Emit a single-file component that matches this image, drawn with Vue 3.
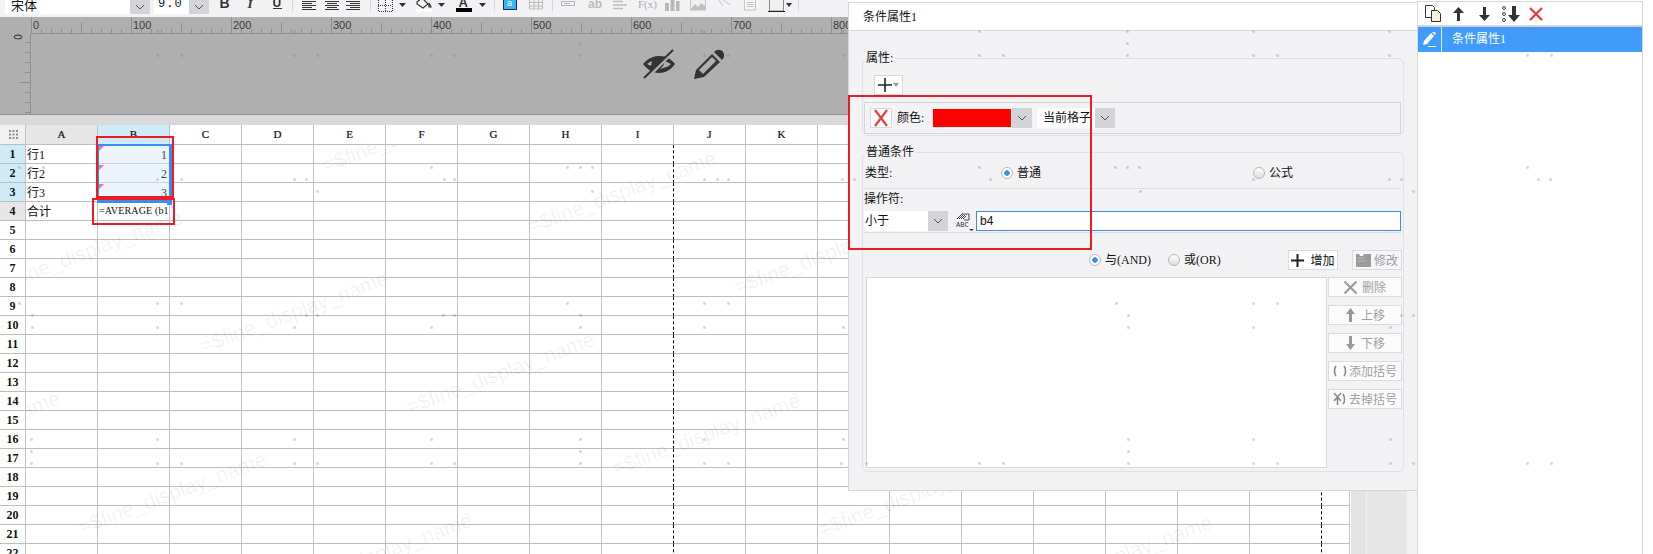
<script setup>
const cols = 'ABCDEFGHIJKLMNOPQRS'.split('')
const rows = Array.from({ length: 22 }, (_, i) => i + 1)
const cellText = {
  'A1': '行1', 'A2': '行2', 'A3': '行3', 'A4': '合计',
  'B1': '1', 'B2': '2', 'B3': '3', 'B4': '=AVERAGE (b1'
}
const ticks = []
for (let u = 0; u <= 810; u += 10) {
  ticks.push({ x: u + 0.5, h: u % 100 === 0 ? 16 : u % 50 === 0 ? 10 : 4 })
}
const labels = [0, 100, 200, 300, 400, 500, 600, 700, 800]
const vticks = [8, 18, 28, 38, 48, 58, 68, 78]

const marks = []
for (let i = -4; i < 9; i++) {
  for (let j = -3; j < 6; j++) {
    const x = 175 + 206 * i + 122 * j
    const y = 190 + 61 * i - 181 * j
    if (x > -260 && x < 1330 && y > -10 && y < 480) marks.push({ x, y })
  }
}

const dotRows = {
  30: [156, 293, 430, 703, 842, 978, 1126, 1252, 1388, 1526],
  42: [579, 1126],
  54: [156, 180, 293, 316, 430, 453, 579, 703, 727, 842, 978, 1002, 1126, 1252, 1276, 1388, 1526, 1550],
  166: [18, 30, 42, 430, 566, 579, 591, 978, 1114, 1126, 1138, 1526],
  178: [156, 180, 293, 305, 443, 453, 703, 716, 727, 841, 853, 989, 1252, 1388, 1400, 1537, 1549],
  190: [316, 591, 1139, 1412],
  302: [18, 156, 180, 566, 703, 727, 1115, 1252, 1276],
  314: [31, 305, 316, 442, 453, 579, 1127, 1400, 1412],
  326: [31, 156, 293, 430, 579, 703, 842, 1127, 1252, 1389],
  438: [30, 156, 293, 430, 579, 703, 842, 1127, 1252, 1389],
  450: [30, 579, 1127],
  462: [30, 156, 180, 293, 316, 430, 453, 579, 703, 727, 840, 865, 978, 1002, 1127, 1252, 1276, 1389, 1412, 1526, 1550]
}
const dots = []
for (const y in dotRows) dotRows[y].forEach((x) => dots.push({ x, y: Number(y) }))

const sideBtns = [
  { label: '删除', icon: 'x' },
  { label: '上移', icon: 'up' },
  { label: '下移', icon: 'down' },
  { label: '添加括号', icon: 'paren' },
  { label: '去掉括号', icon: 'unparen' }
]
</script>

<template>
  <div class="page">
    <div class="workspace">
      <div class="toolbar">
        <div class="tsel font"><span class="tsel-val">宋体</span><span class="tsel-arrow"><svg width="10" height="6" viewBox="0 0 10 6"><path d="M1 1l4 4 4-4" fill="none" stroke="#555" stroke-width="1" /></svg></span></div>
        <div class="tsel size"><span class="tsel-val digits">9.0</span><span class="tsel-arrow"><svg width="10" height="6" viewBox="0 0 10 6"><path d="M1 1l4 4 4-4" fill="none" stroke="#555" stroke-width="1" /></svg></span></div>
        <svg class="strip" width="630" height="17" viewBox="210 0 630 17">
          <text x="219.500" y="8" class="t-b">B</text>
          <text x="247.500" y="8" class="t-i">I</text>
          <text x="272.500" y="6.500" class="t-u">U</text>
          <path d="M273 8.500h9" stroke="#333" />
          <path d="M292.500 0v11M370.500 0v11M494.500 0v11M552.500 0v11M798.500 0v11" stroke="#d6d6d8" />
          <path d="M302 1.500h14M302 3.500h10M302 5.500h14M302 7.500h10M302 9.500h14" stroke="#333" />
          <path d="M325 1.500h14M327 3.500h10M325 5.500h14M327 7.500h10M325 9.500h14" stroke="#333" />
          <path d="M346 1.500h14M350 3.500h10M346 5.500h14M350 7.500h10M346 9.500h14" stroke="#333" />
          <path d="M378.500 0v11.500h14V0M385.500 0v11M378 5.500h14" fill="none" stroke="#333" stroke-dasharray="1 1" />
          <path d="M399 3h7l-3.500 4zM438 3h7l-3.500 4zM479 3h7l-3.500 4zM786 3h6l-3 4z" fill="#333" />
          <path d="M417 2l5-4 6 6-5 4-6-4zM429 3l2 4-2 0z" fill="none" stroke="#333" stroke-width="1.200" />
          <rect x="416" y="9" width="16" height="3" fill="#fff" />
          <text x="458.500" y="6.500" class="t-a">A</text>
          <rect x="456" y="8" width="16" height="4" fill="#000" />
          <rect x="503.500" y="-2" width="13" height="11.500" fill="#36b6f6" stroke="#1d2a44" />
          <text x="507" y="6" class="t-wa">a</text>
          <path d="M529.500 -1h13v10h-13zM529.500 2.500h13M529.500 6h13M534 -1v10M538.500 -1v10" fill="none" stroke="#bcbcbc" />
          <rect x="561.500" y="1.500" width="13" height="4" fill="none" stroke="#b8b8b8" />
          <path d="M564 3.500h6" stroke="#b8b8b8" />
          <text x="588" y="8" class="t-gray">ab</text>
          <path d="M613 1.500h10M613 5h14M613 8.500h10" stroke="#bdbdbd" stroke-width="1.600" />
          <text x="638" y="8" class="t-fx">F(x)</text>
          <path d="M665 3h4v8h-4zM670.500 0h4v11h-4zM676 1h3.500v10H676z" fill="#b8b8b8" />
          <rect x="690.500" y="-1" width="15" height="11" fill="#efeff0" stroke="#c4c4c4" />
          <path d="M691 9l4-5 3 3 3-4 4 3v4h-14z" fill="#c0c0c0" />
          <path d="M718 -1l5 7M722 -1l8 6" stroke="#c4c4c4" fill="none" />
          <rect x="744.500" y="-1" width="11" height="11" fill="#f6f6f6" stroke="#c4c4c4" />
          <path d="M746.500 2.500h7M746.500 4.500h7M746.500 6.500h7" stroke="#c4c4c4" />
          <rect x="769.500" y="-1" width="14" height="12" fill="#f0f0f2" stroke="#888" />
          <path d="M768 11.500h17" stroke="#222" />
        </svg>
      </div>

      <div class="preview">
        <svg class="ruler-top" width="848" height="17" viewBox="0 0 848 17">
          <rect x="31" y="16" width="817" height="1" fill="#8e8e8e" />
          <path v-for="t in ticks" :key="t.x" :d="`M${31 + t.x} ${16 - t.h}v${t.h}`" stroke="#8f8f8f" fill="none" />
          <text v-for="l in labels" :key="l" :x="33 + l" y="12" class="ruler-txt">{{ l }}</text>
        </svg>
        <div class="preview-body">
          <div class="ruler-left">
            <span class="ruler-zero">0</span>
            <span v-for="v in vticks" :key="v" class="vtick" :style="{ top: v + 'px', width: (v === 48 ? 10 : 5) + 'px' }"></span>
          </div>
          <div class="canvas">
            <svg class="eye" width="33" height="30" viewBox="0 0 33 30">
              <path d="M0 15C6 8 12 7 17 7C23 7 28 10 32 15C28 21 22 24 16 24C9 24 4 20 0 15z" fill="#333" />
              <path d="M4 15c2-1.500 3-2 5-3l-1 5c-1-.5-2-1-4-2z" fill="#afafaf" />
              <path d="M22 12c2 1 4 2 6 3-2 2-4 3-8 4l-3 1 3-3z" fill="#afafaf" />
              <path d="M3 30L32 1" stroke="#afafaf" stroke-width="3" />
              <path d="M1 29L30 1" stroke="#333" stroke-width="2" />
            </svg>
            <svg class="pencil" width="31" height="30" viewBox="0 0 31 30">
              <path d="M0 30l2-9L18 5l8 8L10 28z" fill="#333" />
              <path d="M5 21L18 8l4 4L9 25z" fill="#afafaf" />
              <path d="M20 3c3-3 7-3 9 0s1 6-1 8z" fill="#333" />
            </svg>
          </div>
        </div>
      </div>

      <div class="gap-bar"></div>

      <div class="sheet-wrap">
        <div class="sheet">
          <div class="grid">
            <div class="corner">
              <svg width="11" height="11" viewBox="0 0 11 11"><path d="M1 1h2v2H1zM4.500 1h2v2h-2zM8 1h2v2H8zM1 4.500h2v2H1zM4.500 4.500h2v2h-2zM8 4.500h2v2H8zM1 8h2v2H1zM4.500 8h2v2h-2zM8 8h2v2H8z" fill="#8d8d8d" /></svg>
            </div>
            <div v-for="c in cols" :key="c" class="colh" :class="{ gray: c === 'A', blue: c === 'B' }">{{ c === 'S' ? '' : c }}</div>
            <template v-for="r in rows" :key="r">
              <div class="rowh" :class="{ blue: r < 4, gray: r === 4 }">{{ r }}</div>
              <div
                v-for="c in cols"
                :key="c + r"
                class="cell"
                :class="{ picked: c === 'B' && r < 4, formula: c === 'B' && r === 4, pb: c === 'I' || c === 'R' }"
              ><i v-if="c === 'B' && r < 4" class="flag"></i><span>{{ cellText[c + r] }}</span></div>
            </template>
          </div>
          <div class="marks">
            <span v-for="m in marks" :key="m.x + '_' + m.y" class="mark" :style="{ left: m.x + 'px', top: m.y + 'px' }">=$fine_display_name</span>
          </div>
          <div class="selbox"><i class="handle"></i></div>
          <div class="redbox one"></div>
          <div class="redbox two"></div>
        </div>
        <div class="scroll"><div class="scroll-a"></div><div class="scroll-b"></div><div class="scroll-c"></div></div>
      </div>

      <div class="dialog">
        <div class="title">条件属性1</div>
        <div class="group first">
          <div class="legend">属性:</div>
          <button class="plus">
            <svg width="14" height="14" viewBox="0 0 14 14"><path d="M7 0v14M0 7h14" stroke="#222" stroke-width="1.600" /></svg>
            <svg width="6" height="4" viewBox="0 0 6 4"><path d="M0 0h6L3 4z" fill="#999" /></svg>
          </button>
          <div class="attr">
            <button class="xbtn"><svg width="14" height="18" viewBox="0 0 14 18"><path d="M1 1l12 16M13 1L1 17" stroke="#e8413c" stroke-width="2.200" /></svg></button>
            <span class="attr-label">颜色:</span>
            <div class="sel color"><span class="swatch"></span><span class="arrow"><svg width="10" height="6" viewBox="0 0 10 6"><path d="M1 1l4 4 4-4" fill="none" stroke="#555" /></svg></span></div>
            <div class="sel scope"><span class="val">当前格子</span><span class="arrow"><svg width="10" height="6" viewBox="0 0 10 6"><path d="M1 1l4 4 4-4" fill="none" stroke="#555" /></svg></span></div>
          </div>
        </div>

        <div class="group second">
          <div class="legend">普通条件</div>
          <div class="type-row">
            <span class="type-label">类型:</span>
            <label class="radio w252"><i class="dot on"></i>普通</label>
            <label class="radio"><i class="dot"></i>公式</label>
          </div>
          <div class="rule r1"></div>
          <div class="op-label">操作符:</div>
          <div class="op-row">
            <div class="sel op"><span class="val">小于</span><span class="arrow"><svg width="10" height="6" viewBox="0 0 10 6"><path d="M1 1l4 4 4-4" fill="none" stroke="#555" /></svg></span></div>
            <div class="abc">
              <svg width="20" height="20" viewBox="0 0 20 20">
                <path d="M2 8l5-5h7v6H9" fill="none" stroke="#444" />
                <path d="M4 8l4-4M6 8l4-4M8 8l3-3" stroke="#444" />
                <text x="1" y="15.500" class="t-abc">ABC</text>
                <path d="M14 18h5l-2.500 2z" fill="#333" />
              </svg>
            </div>
            <div class="input">b4</div>
          </div>
          <div class="rule r2"></div>
          <div class="logic-row">
            <label class="radio w79"><i class="dot on"></i>与(AND)</label>
            <label class="radio w120"><i class="dot"></i>或(OR)</label>
            <button class="btn add">
              <svg width="13" height="13" viewBox="0 0 13 13"><path d="M6.500 0v13M0 6.500h13" stroke="#222" stroke-width="2" /></svg>增加
            </button>
            <button class="btn mod">
              <svg width="15" height="14" viewBox="0 0 15 14"><path d="M0 1h3l1 2h3l1-2h7v13H0z" fill="#9b9b9b" /><path d="M2 5h7M2 8h8" stroke="#bbb" /></svg>修改
            </button>
          </div>
          <div class="list-row">
            <div class="list"></div>
            <div class="side-btns">
              <button v-for="b in sideBtns" :key="b.label" class="btn side" :class="b.icon">
                <svg v-if="b.icon === 'x'" width="13" height="13" viewBox="0 0 13 13"><path d="M0.500 0.500l12 12M12.500 0.500l-12 12" stroke="#999" stroke-width="2" /></svg>
                <svg v-else-if="b.icon === 'up'" width="11" height="14" viewBox="0 0 11 14"><path d="M5.500 0L10 6H7v8H4V6H1z" fill="#999" /></svg>
                <svg v-else-if="b.icon === 'down'" width="11" height="14" viewBox="0 0 11 14"><path d="M5.500 14L10 8H7V0H4v8H1z" fill="#999" /></svg>
                <svg v-else-if="b.icon === 'paren'" width="14" height="12" viewBox="0 0 14 12"><path d="M3 1C1 3 1 9 3 11M11 1c2 2 2 8 0 10" fill="none" stroke="#888" stroke-width="1.600" /></svg>
                <svg v-else width="14" height="14" viewBox="0 0 14 14"><path d="M10 2c2 3 2 8 0 10M1 1l7 8M8 1L1 9M4.500 6v7" fill="none" stroke="#888" stroke-width="1.500" /></svg>
                {{ b.label }}
              </button>
            </div>
          </div>
        </div>
        <div class="redbox three"></div>
      </div>
    </div>

    <div class="panel">
      <div class="panel-tools">
        <svg width="17" height="17" viewBox="0 0 17 17">
          <path d="M0.500 0.500h7l2 2v10h-9z" fill="#fff" stroke="#333" />
          <path d="M6.500 5.500h6l3 3v8h-9z" fill="#fbf3dc" stroke="#333" />
        </svg>
        <svg class="gap-a" width="11" height="14" viewBox="0 0 11 14"><path d="M5.500 0L11 6H7v8H4V6H0z" fill="#333" /></svg>
        <svg class="gap-b" width="11" height="14" viewBox="0 0 11 14"><path d="M5.500 14L11 8H7V0H4v8H0z" fill="#333" /></svg>
        <svg class="gap-c" width="18" height="16" viewBox="0 0 18 16">
          <circle cx="2" cy="2" r="1.500" fill="none" stroke="#444" />
          <circle cx="2" cy="8" r="1.500" fill="none" stroke="#444" />
          <circle cx="2" cy="14" r="1.500" fill="none" stroke="#444" />
          <path d="M12 16l6-7h-4V0h-4v9H6z" fill="#333" />
        </svg>
        <svg class="gap-d" width="14" height="14" viewBox="0 0 14 14"><path d="M1 1l12 12M13 1L1 13" stroke="#e8413c" stroke-width="2.400" /></svg>
      </div>
      <div class="panel-item">
        <span class="item-icon">
          <svg width="15" height="15" viewBox="0 0 15 15">
            <path d="M1 13l1-4 7-8 3 3-7 8z" fill="#fff" />
            <path d="M10 0l3 3 1-2-2-1z" fill="#fff" />
            <path d="M6 14.500h8" stroke="#fff" />
          </svg>
        </span>
        <span class="item-text">条件属性1</span>
      </div>
    </div>

    <i v-for="(d, i) in dots" :key="i" class="wdot" :style="{ left: d.x + 'px', top: d.y + 'px' }"></i>
  </div>
</template>

<style>
html, body { margin: 0; background: #fff; overflow: hidden; }
</style>

<style scoped>
.page {
  position: relative;
  width: 1653px;
  height: 554px;
  display: flex;
  overflow: hidden;
  background: #fff;
  font: 12px "Liberation Serif", "Noto Sans CJK SC", serif;
  color: #111;
}
.workspace {
  position: relative;
  width: 1417px;
  flex: none;
  display: flex;
  flex-direction: column;
}
.toolbar {
  height: 17px;
  width: 848px;
  display: flex;
  overflow: hidden;
  background: #f3f3f5;
  padding-left: 5px;
  box-sizing: border-box;
}
.tsel { height: 14px; display: flex; background: #fff; }
.font { width: 145px; }
.size { width: 55px; margin-left: 4px; }
.tsel-val {
  flex: 1;
  font: 13px/10px "Noto Sans CJK SC", sans-serif;
  padding-left: 6px;
  overflow: hidden;
}
.tsel-val.digits { font: 12px/9px "Liberation Mono", monospace; color: #123; padding-left: 4px; letter-spacing: 1px; }
.tsel-arrow {
  width: 20px;
  background: #d3d4d8;
  display: flex;
  align-items: flex-end;
  justify-content: center;
  padding-bottom: 4px;
  box-sizing: border-box;
}
.strip { flex: none; margin-left: 1px; }
.t-b { font: bold 14px "Liberation Sans", sans-serif; fill: #333; }
.t-i { font: italic bold 13px "Liberation Serif", serif; fill: #333; }
.t-u { font: bold 12px "Liberation Sans", sans-serif; fill: #333; }
.t-a { font: bold 13px "Liberation Sans", sans-serif; fill: #333; }
.t-wa { font: 9px "Liberation Sans", sans-serif; fill: #fff; }
.t-gray { font: bold 12px "Liberation Sans", sans-serif; fill: #bbb; }
.t-fx { font: 11px "Liberation Serif", serif; fill: #aaa; }
.t-abc { font: 7px "Liberation Mono", monospace; fill: #333; }

.preview {
  width: 848px;
  height: 97px;
  background: #afafaf;
  border-bottom: 1px solid #8f8f8f;
  display: flex;
  flex-direction: column;
  overflow: hidden;
}
.ruler-top { flex: none; display: block; }
.ruler-txt { font: 11px "Liberation Sans", sans-serif; fill: #3a3a3a; }
.preview-body { flex: 1; display: flex; }
.ruler-left {
  position: relative;
  width: 30px;
  flex: none;
  border-right: 1px solid #8f8f8f;
}
.ruler-zero {
  position: absolute;
  left: 16px;
  top: -2px;
  font: 10px/10px "Liberation Sans", sans-serif;
  color: #222;
  transform: rotate(-90deg);
}
.vtick { position: absolute; right: 0; height: 1px; background: #8f8f8f; }
.canvas {
  flex: 1;
  display: flex;
  align-items: flex-start;
  padding: 15px 0 0 612px;
  box-sizing: border-box;
}
.pencil { margin-left: 18px; }
.gap-bar { height: 10px; width: 848px; background: #d9d9db; }

.sheet-wrap { flex: 1; display: flex; min-height: 0; }
.sheet { position: relative; width: 1350px; flex: none; overflow: hidden; background: #fff; }
.grid {
  display: grid;
  grid-template-columns: 26px repeat(18, 72px) 28px;
  grid-template-rows: 20px;
  grid-auto-rows: 19px;
}
.corner, .colh, .rowh, .cell {
  box-sizing: border-box;
  border-right: 1px solid #c2c2c2;
  border-bottom: 1px solid #bdbdbd;
  overflow: hidden;
  white-space: nowrap;
}
.corner { display: flex; align-items: center; justify-content: center; background: #f0f0f0; border-left: 1px solid #eee; }
.colh {
  text-align: center;
  font: 11px/18px "Liberation Serif", serif;
  background: #fff;
  -webkit-text-stroke: 0.2px #000;
}
.colh.gray, .rowh.gray { background: #e6e6e6; }
.colh.blue, .rowh.blue { background: #cdebf9; }
.rowh { text-align: center; font: bold 12px/18px "Liberation Serif", serif; }
.cell { padding: 2px 0 0 1px; line-height: 16px; position: relative; }
.cell.picked {
  display: flex;
  justify-content: flex-end;
  padding-right: 2px;
  background: #ecf4fc;
  border-bottom-color: #cdd6e0;
  color: #444;
}
.flag {
  position: absolute;
  left: 1px;
  top: 1px;
  width: 0;
  height: 0;
  border-top: 5px solid #f0719c;
  border-right: 5px solid transparent;
}
.cell.formula { font: 10px/12px "Liberation Serif", serif; padding-top: 3px; letter-spacing: 0.150px; }
.cell.pb { border-right: 1px dashed #000; }

.marks { position: absolute; left: 26px; top: 20px; right: 0; bottom: 0; overflow: hidden; pointer-events: none; }
.mark {
  position: absolute;
  white-space: nowrap;
  font: 21px/24px "Liberation Sans", sans-serif;
  color: rgba(0, 0, 0, 0.06);
  transform: rotate(-20.500deg);
  transform-origin: 0 50%;
}
.selbox {
  position: absolute;
  left: 97px;
  top: 19px;
  width: 75px;
  height: 59px;
  box-sizing: border-box;
  border: 2px solid #3a8cf0;
  border-right-width: 3px;
  border-bottom-width: 3px;
}
.handle { position: absolute; right: -3px; bottom: -5px; width: 5px; height: 5px; background: #3a8cf0; }
.redbox { position: absolute; border: 2px solid #ed1c24; box-sizing: border-box; pointer-events: none; }
.redbox.one { left: 96px; top: 11px; width: 78px; height: 62px; }
.redbox.two { left: 92px; top: 73px; width: 83px; height: 27px; }
.redbox.three { left: -1px; top: 92px; width: 244px; height: 155px; }

.scroll { flex: 1; display: flex; border-left: 1px solid #fff; }
.scroll-a { width: 15px; background: #e3e3e3; border-right: 1px solid #f2f2f2; }
.scroll-b { width: 40px; background: #e6e6e6; }
.scroll-c { flex: 1; background: #f2f2f3; }

.dialog {
  position: absolute;
  left: 848px;
  top: 2px;
  width: 569px;
  height: 489px;
  box-sizing: border-box;
  background: #f3f3f5;
  border: 1px solid #d6d6da;
  border-right: 0;
  font: 12px/16px "Liberation Serif", "Noto Sans CJK SC", serif;
  color: #111;
}
.title {
  height: 28px;
  box-sizing: border-box;
  background: #fff;
  border-bottom: 1px solid #d6d6da;
  padding: 6px 0 0 14px;
}
.group {
  margin-left: 13px;
  width: 542px;
  box-sizing: border-box;
  border: 1px solid #e2e2e6;
  border-radius: 6px;
}
.group.first { margin-top: 27px; height: 78px; }
.group.second { margin-top: 16px; height: 320px; }
.legend {
  margin: -10px 0 1px 1px;
  width: fit-content;
  height: 18px;
  line-height: 18px;
  padding: 0 2px;
  background: #f3f3f5;
}
.plus {
  display: flex;
  align-items: center;
  gap: 1px;
  margin: 8px 0 0 11px;
  width: 29px;
  height: 20px;
  padding: 0 0 0 3px;
  box-sizing: border-box;
  background: #fff;
  border: 1px solid #d9d9dc;
}
.attr {
  margin: 7px 2px 0 1px;
  height: 32px;
  box-sizing: border-box;
  border: 1px solid #d6d6da;
  display: flex;
  align-items: center;
  padding-left: 5px;
}
.xbtn {
  width: 22px;
  height: 20px;
  padding: 0;
  box-sizing: border-box;
  background: #fff;
  border: 1px solid #d9d9dc;
  display: flex;
  align-items: center;
  justify-content: center;
}
.attr-label { margin: 0 5px 0 5px; width: 30px; }
.sel { display: flex; height: 20px; background: #fff; }
.arrow {
  width: 20px;
  flex: none;
  background: #d3d4d8;
  display: flex;
  align-items: center;
  justify-content: center;
}
.color { width: 100px; }
.swatch { flex: 1; background: #ff0000; border: 1px solid #e8e8e8; box-sizing: border-box; }
.scope { width: 78px; margin-left: 5px; }
.val { flex: 1; line-height: 20px; padding-left: 6px; overflow: hidden; white-space: nowrap; }
.op { width: 84px; }
.op .val { padding-left: 1px; }
.type-row { margin-top: 2px; height: 20px; display: flex; align-items: center; padding-left: 2px; }
.type-label { width: 136px; }
.radio { display: flex; align-items: center; gap: 4px; height: 20px; }
.w252 { width: 252px; }
.w79 { width: 79px; }
.w120 { width: 120px; }
.dot {
  width: 12px;
  height: 12px;
  box-sizing: border-box;
  border: 1px solid #b8b8bc;
  border-radius: 50%;
  background: linear-gradient(#fff, #dedee0);
  display: block;
  position: relative;
}
.dot.on { background: radial-gradient(circle, #3f8ff2 0 2.500px, #fff 3px); }
.rule { margin: 0 2px 0 1px; height: 1px; background: #dedee2; }
.r1 { margin-top: 5px; }
.op-label { margin: 2px 0 4px 1px; height: 16px; }
.op-row { display: flex; margin-left: 1px; width: 537px; height: 20px; }
.abc { width: 20px; margin: 0 1px 0 7px; }
.abc svg { display: block; }
.input {
  flex: 1;
  box-sizing: border-box;
  background: #fff;
  border: 1px solid #3a8cf0;
  padding-left: 3px;
  line-height: 18px;
  font-family: "Liberation Sans", sans-serif;
}
.r2 { margin-top: 1px; }
.logic-row { margin-top: 17px; padding-left: 226px; height: 20px; display: flex; align-items: center; }
.btn {
  display: flex;
  align-items: center;
  justify-content: center;
  gap: 6px;
  height: 20px;
  width: 50px;
  padding: 0;
  box-sizing: border-box;
  font: 12px/16px "Noto Sans CJK SC", sans-serif;
  border: 1px solid #dcdce0;
  background: #fff;
  color: #111;
}
.btn.add { margin-left: 0; }
.btn.mod { margin-left: 14px; background: #f6f6f8; color: #9c9c9c; gap: 3px; }
.btn.side { width: 74px; color: #a0a0a0; gap: 5px; background: #fbfbfc; }
.btn.side.paren, .btn.side.unparen { gap: 2px; }
.list-row { display: flex; margin: 6px 0 0 3px; }
.list {
  width: 461px;
  height: 191px;
  box-sizing: border-box;
  margin-top: 1px;
  background: #fff;
  border: 1px solid #d8d8dc;
}
.side-btns { display: flex; flex-direction: column; gap: 8px; margin: 1px 0 0 1px; }

.panel {
  width: 226px;
  height: 554px;
  box-sizing: border-box;
  flex: none;
  margin-top: 1px;
  background: #fff;
  border: 1px solid #d9d9dc;
  border-bottom: 0;
  font: 12px/16px "Liberation Serif", "Noto Sans CJK SC", serif;
}
.panel-tools {
  height: 25px;
  box-sizing: border-box;
  border-bottom: 2px solid #d4d4d4;
  display: flex;
  align-items: center;
  padding: 0 0 0 7px;
}
.gap-a { margin-left: 11px; }
.gap-b { margin-left: 15px; }
.gap-c { margin-left: 12px; }
.gap-d { margin-left: 9px; }
.panel-item { height: 25px; display: flex; background: #409cf8; color: #fff; }
.item-icon {
  width: 24px;
  box-sizing: border-box;
  border-right: 1px solid #d8ecff;
  display: flex;
  align-items: center;
  justify-content: center;
}
.item-text { margin-left: 10px; line-height: 25px; }

.wdot {
  position: absolute;
  width: 3px;
  height: 3px;
  background: rgba(120, 120, 120, 0.3);
  border-radius: 50%;
  pointer-events: none;
}
</style>
